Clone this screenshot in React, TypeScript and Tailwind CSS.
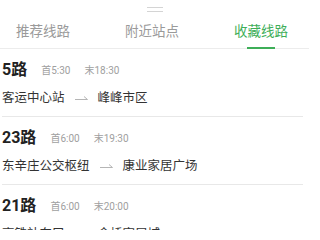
const tabs = ['推荐线路', '附近站点', '收藏线路'];

const routes = [
  { name: '5', first: '5:30', last: '18:30', from: '客运中心站', to: '峰峰市区' },
  { name: '23', first: '6:00', last: '19:30', from: '东辛庄公交枢纽', to: '康业家居广场' },
  { name: '21', first: '6:00', last: '20:00', from: '高铁站东口', to: '金桥家居城' },
];

function Arrow() {
  return (
    <svg width="13" height="6" viewBox="0 0 13 6" className="mx-[10px] text-[#b5b5b5]">
      <path d="M0 4.5H12.5M12.5 4.5L9 1.5" stroke="currentColor" strokeWidth="1" fill="none" />
    </svg>
  );
}

export default function App() {
  return (
    <div className="w-[309px] h-[230px] overflow-hidden bg-white font-['Roboto','Noto_Sans_CJK_SC',sans-serif]">
      <div className="relative h-[49px] border-b border-[#ececec]">
        <div className="flex flex-col items-center gap-[2.5px] pt-[7px]">
          <div className="w-4 h-px bg-[#d4d4d4]" />
          <div className="w-4 h-px bg-[#d4d4d4]" />
        </div>
        <div className="flex pl-4 gap-[55px] mt-[9px]">
          {tabs.map((t, i) => (
            <div key={t} className="relative">
              <span
                className={`block text-[13.5px] leading-5 ${i === 2 ? 'text-[#3eae58]' : 'text-[#9a9a9a]'}`}
              >
                {t}
              </span>
              {i === 2 && (
                <div className="absolute left-1/2 -translate-x-1/2 top-[26px] w-7 h-[2px] bg-[#3eae58]" />
              )}
            </div>
          ))}
        </div>
      </div>
      <div className="pl-[2px] pr-[6px]">
        {routes.map((r) => (
          <div key={r.name} className="pt-[11px] pb-2 border-b border-[#e8e8e8]">
            <div className="flex items-center h-5">
              <span className="text-[16px] font-bold text-[#222] leading-5">{r.name}路</span>
              <span className="ml-[14px] text-[10px] text-[#a0a0a0]">首{r.first}</span>
              <span className="ml-[14px] text-[10px] text-[#a0a0a0]">末{r.last}</span>
            </div>
            <div className="flex items-center h-5 mt-2 text-[12.5px] text-[#333]">
              <span>{r.from}</span>
              <Arrow />
              <span>{r.to}</span>
            </div>
          </div>
        ))}
      </div>
    </div>
  );
}
